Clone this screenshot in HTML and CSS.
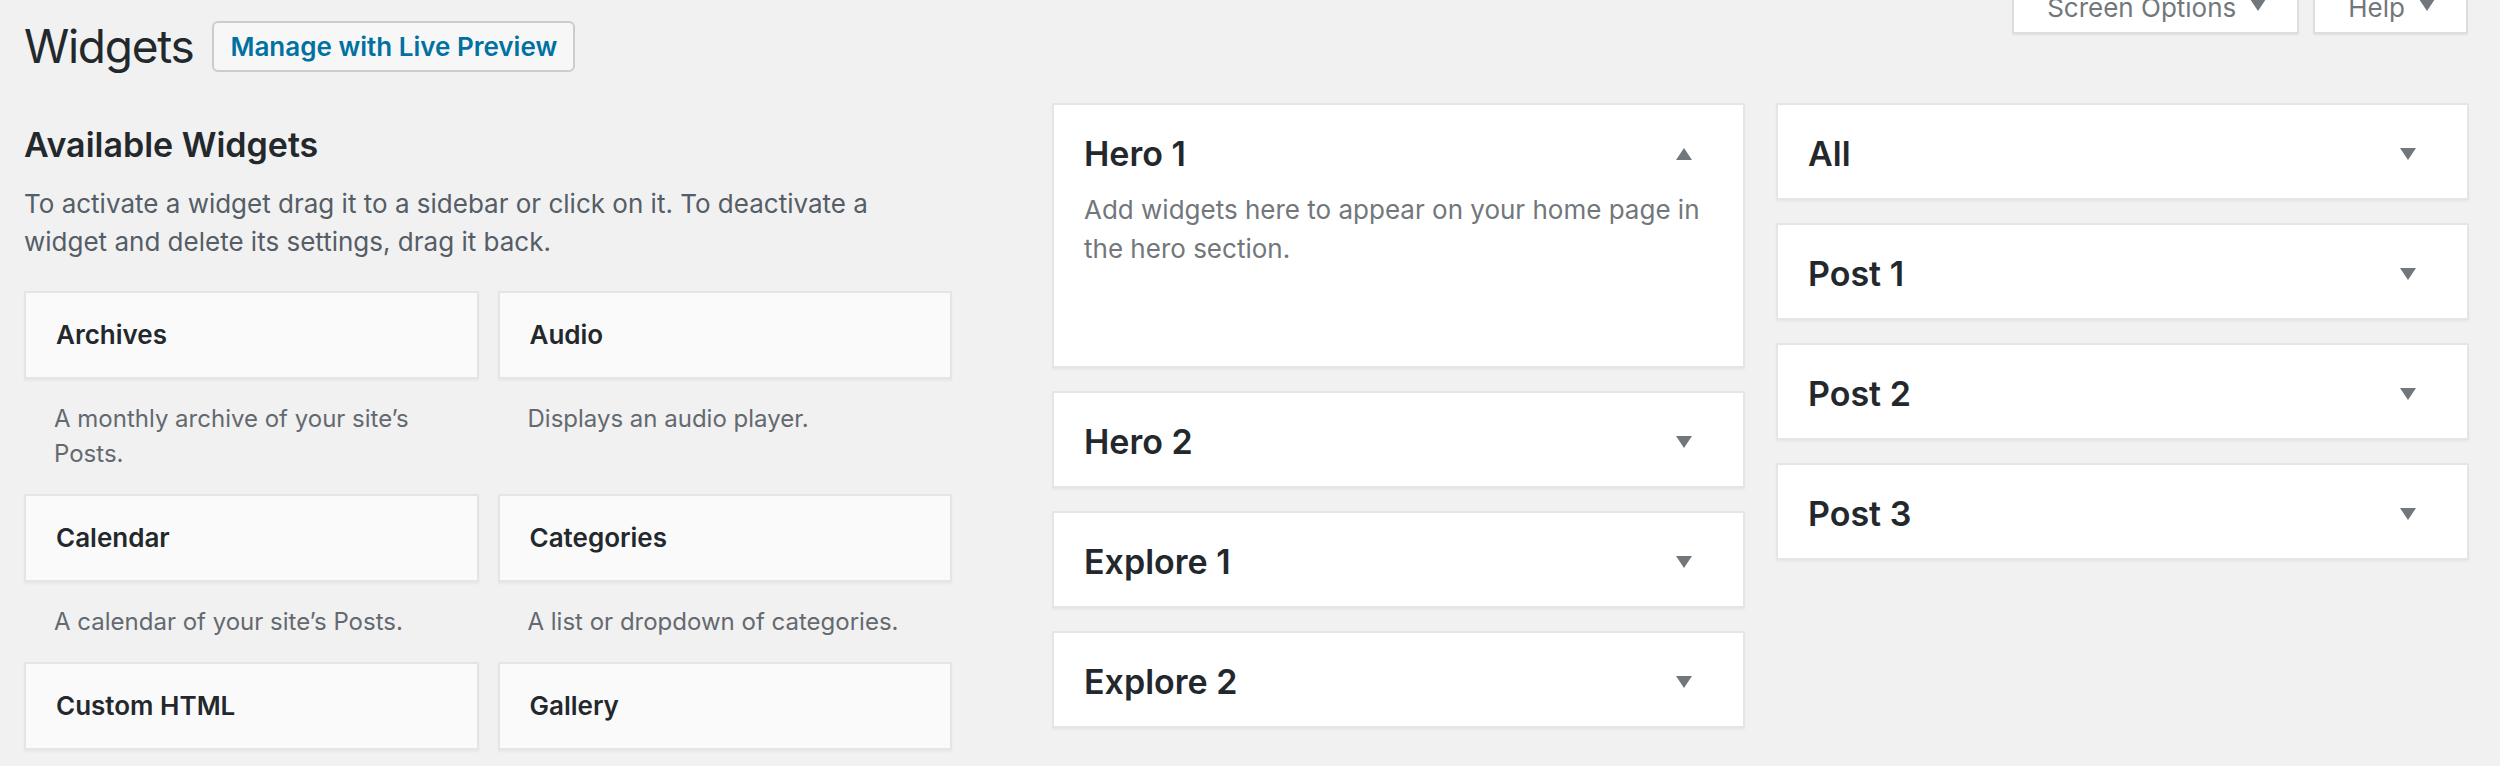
FILE: index.html
```html
<!DOCTYPE html>
<html lang="en">
<head>
<meta charset="utf-8">
<title>Widgets</title>
<link rel="stylesheet" href="styles.css">
</head>
<body>
<div class="screen-meta-links">
  <button class="meta-tab" type="button">Screen Options <svg class="caret" viewBox="0 0 16 12" width="16" height="12"><path d="M0 0H16L8 12Z"/></svg></button>
  <button class="meta-tab" type="button">Help <svg class="caret" viewBox="0 0 16 12" width="16" height="12"><path d="M0 0H16L8 12Z"/></svg></button>
</div>
<div class="wrap">
  <div class="page-head">
    <h1>Widgets</h1>
    <a class="button" href="#">Manage with Live Preview</a>
  </div>
  <div class="widgets-layout">
    <section class="available">
      <h2>Available Widgets</h2>
      <p class="intro">To activate a widget drag it to a sidebar or click on it. To deactivate a widget and delete its settings, drag it back.</p>
      <div class="widget-grid">
        <div class="widget">
          <div class="widget-title">Archives</div>
          <p class="widget-desc">A monthly archive of your site’s Posts.</p>
        </div>
        <div class="widget">
          <div class="widget-title">Audio</div>
          <p class="widget-desc">Displays an audio player.</p>
        </div>
        <div class="widget">
          <div class="widget-title">Calendar</div>
          <p class="widget-desc">A calendar of your site’s Posts.</p>
        </div>
        <div class="widget">
          <div class="widget-title">Categories</div>
          <p class="widget-desc">A list or dropdown of categories.</p>
        </div>
        <div class="widget">
          <div class="widget-title">Custom HTML</div>
        </div>
        <div class="widget">
          <div class="widget-title">Gallery</div>
        </div>
      </div>
    </section>
    <div class="sidebars-col">
      <div class="sidebar open">
        <div class="sidebar-head"><h2>Hero 1</h2><svg class="caret" viewBox="0 0 16 12" width="16" height="12"><path d="M8 0L16 12H0Z"/></svg></div>
        <p class="sidebar-desc">Add widgets here to appear on your home page in the hero section.</p>
        <div class="sidebar-drop"></div>
      </div>
      <div class="sidebar">
        <div class="sidebar-head"><h2>Hero 2</h2><svg class="caret" viewBox="0 0 16 12" width="16" height="12"><path d="M0 0H16L8 12Z"/></svg></div>
      </div>
      <div class="sidebar">
        <div class="sidebar-head"><h2>Explore 1</h2><svg class="caret" viewBox="0 0 16 12" width="16" height="12"><path d="M0 0H16L8 12Z"/></svg></div>
      </div>
      <div class="sidebar">
        <div class="sidebar-head"><h2>Explore 2</h2><svg class="caret" viewBox="0 0 16 12" width="16" height="12"><path d="M0 0H16L8 12Z"/></svg></div>
      </div>
    </div>
    <div class="sidebars-col">
      <div class="sidebar">
        <div class="sidebar-head"><h2>All</h2><svg class="caret" viewBox="0 0 16 12" width="16" height="12"><path d="M0 0H16L8 12Z"/></svg></div>
      </div>
      <div class="sidebar">
        <div class="sidebar-head"><h2>Post 1</h2><svg class="caret" viewBox="0 0 16 12" width="16" height="12"><path d="M0 0H16L8 12Z"/></svg></div>
      </div>
      <div class="sidebar">
        <div class="sidebar-head"><h2>Post 2</h2><svg class="caret" viewBox="0 0 16 12" width="16" height="12"><path d="M0 0H16L8 12Z"/></svg></div>
      </div>
      <div class="sidebar">
        <div class="sidebar-head"><h2>Post 3</h2><svg class="caret" viewBox="0 0 16 12" width="16" height="12"><path d="M0 0H16L8 12Z"/></svg></div>
      </div>
    </div>
  </div>
</div>
</body>
</html>
```
FILE: styles.css
```css
* { box-sizing: border-box; }
html, body { margin: 0; padding: 0; }
body {
  background: #f1f1f1;
  font-family: Inter, "Noto Sans", sans-serif;
  color: #23282d;
  width: 2500px;
  height: 766px;
  overflow: hidden;
}
.caret { display: block; flex: none; fill: #72777c; }

.screen-meta-links {
  float: right;
  display: flex;
  gap: 14px;
  margin: -20px 32px 0 0;
}
.meta-tab {
  display: flex;
  align-items: flex-end;
  gap: 14px;
  height: 54px;
  padding: 0 31px 11px 33px;
  background: #fff;
  border: 2px solid #ddd;
  border-top: 0;
  box-shadow: 0 2px 2px -1px rgba(0,0,0,.08);
  font-family: Inter, "Noto Sans", sans-serif;
  font-size: 26px;
  line-height: 26px;
  color: #72777c;
}
.meta-tab .caret { margin-bottom: 10px; }

.wrap { padding: 0 31px 0 24px; }
.page-head {
  display: flex;
  align-items: center;
  gap: 19px;
  margin-top: 21px;
  height: 51px;
}
.page-head h1 {
  margin: 0;
  font-size: 46px;
  font-weight: 400;
  line-height: 51px;
  letter-spacing: -1.3px;
  color: #23282d;
}
.button {
  display: inline-flex;
  align-items: center;
  height: 51px;
  padding: 0 16px;
  border: 2px solid #ccc;
  border-radius: 6px;
  background: #f7f7f7;
  color: #0071a1;
  font-size: 26px;
  font-weight: 600;
  text-decoration: none;
}

.widgets-layout {
  display: flex;
  align-items: flex-start;
  margin-top: 31px;
}
.available { width: 928px; flex: none; margin-right: 100px; }
.available h2 {
  margin: 22px 0 0;
  font-size: 34px;
  font-weight: 600;
  line-height: 40px;
}
.intro {
  margin: 20px 0 30px;
  font-size: 26px;
  line-height: 38px;
  color: #555d66;
}
.widget-grid {
  display: grid;
  grid-template-columns: 1fr 1fr;
  column-gap: 19px;
}
.widget-title {
  height: 88px;
  display: flex;
  align-items: center;
  padding: 0 30px;
  background: #fafafa;
  border: 2px solid #e5e5e5;
  box-shadow: 0 2px 2px rgba(0,0,0,.04);
  font-size: 26px;
  font-weight: 600;
  line-height: 26px;
}
.widget-desc {
  margin: 0;
  padding: 22px 30px 23px;
  font-size: 24px;
  line-height: 35px;
  color: #646970;
}

.sidebars-col {
  width: 693px;
  flex: none;
  display: flex;
  flex-direction: column;
  gap: 23px;
}
.sidebars-col + .sidebars-col { margin-left: 31px; }
.sidebar {
  background: #fff;
  border: 2px solid #e5e5e5;
  box-shadow: 0 2px 2px rgba(0,0,0,.04);
}
.sidebar-head {
  display: flex;
  align-items: center;
  justify-content: space-between;
  padding: 32px 51px 28px 30px;
}
.sidebar-head h2 {
  margin: 0;
  font-size: 34px;
  font-weight: 600;
  line-height: 33px;
}
.sidebar.open .sidebar-head { padding-bottom: 20px; }
.sidebar-desc {
  margin: 0;
  padding: 0 30px;
  font-size: 26px;
  line-height: 39px;
  color: #72777c;
}
.sidebar-drop { height: 98px; }
```
